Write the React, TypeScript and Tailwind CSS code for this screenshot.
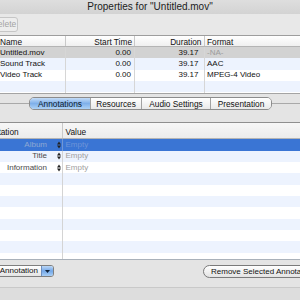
const tracks = [
  { name: "Untitled.mov", start: "0.00", duration: "39.17", format: "-NA-", dim: true },
  { name: "Sound Track", start: "0.00", duration: "39.17", format: "AAC", dim: false },
  { name: "Video Track", start: "0.00", duration: "39.17", format: "MPEG-4 Video", dim: false },
];

const annotations = [
  { key: "Album", value: "Empty" },
  { key: "Title", value: "Empty" },
  { key: "Information", value: "Empty" },
];

const tabs = [
  { label: "Annotations", width: "w-[60px]", selected: true },
  { label: "Resources", width: "w-[51px]", selected: false },
  { label: "Audio Settings", width: "w-[69px]", selected: false },
  { label: "Presentation", width: "w-[61px]", selected: false },
];

function Stepper() {
  return (
    <svg width="4" height="8" viewBox="0 0 4 8" className="shrink-0">
      <path d="M0 3.4 L2 0.6 L4 3.4 Z" fill="#222" />
      <path d="M0 4.6 L4 4.6 L2 7.4 Z" fill="#222" />
    </svg>
  );
}

export default function App() {
  const stripes = Array.from({ length: 11 }, (_, i) => i);

  return (
    <div className="flex h-[300px] w-[300px] flex-col overflow-hidden bg-[#e4e4e4] font-['Liberation_Sans',Arial,sans-serif] text-[#111]">
      {/* title bar */}
      <div className="flex h-[14px] shrink-0 items-center justify-center bg-gradient-to-b from-[#dedede] to-[#d3d3d3] text-[10px] leading-none text-[#1c1c1c]">
        Properties for "Untitled.mov"
      </div>

      {/* toolbar */}
      <div className="flex h-[22px] shrink-0 items-center border-b border-[#9d9d9d] bg-[#e8e8e8]">
        <div className="ml-[-10px] flex h-[15px] w-[28px] items-center justify-center rounded-[3px] border border-[#c6c6c6] bg-[#ededed] text-[8.5px] text-[#a3a3a3]">
          Delete
        </div>
      </div>

      {/* tracks table */}
      <div className="shrink-0 border-b border-[#a4a4a4] bg-white text-[8px] leading-none">
        <div className="grid h-[11px] grid-cols-[66px_69px_70px_1fr] items-center border-b border-[#b4b4b4] bg-gradient-to-b from-white to-[#efefef] text-[8.3px]">
          <div className="h-full border-r border-[#c9c9c9] pt-[2px]">Name</div>
          <div className="h-full border-r border-[#c9c9c9] pr-[2px] pt-[2px] text-right">Start Time</div>
          <div className="h-full border-r border-[#c9c9c9] pr-[2.5px] pt-[2px] text-right">Duration</div>
          <div className="h-full pl-[2px] pt-[2px]">Format</div>
        </div>
        {[0, 1, 2, 3].map((i) => {
          const t = tracks[i];
          const bg = i === 0 ? "bg-[#d2d2d2]" : i % 2 === 1 ? "bg-[#edf3fe]" : "bg-white";
          return (
            <div key={i} className={`grid h-[11.33px] grid-cols-[66px_69px_70px_1fr] items-stretch ${bg}`}>
              <div className="flex items-center border-r border-[#d6d6d6]">{t?.name}</div>
              <div className="flex items-center justify-end border-r border-[#d6d6d6] pr-[3px]">{t?.start}</div>
              <div className="flex items-center justify-end border-r border-[#d6d6d6] pr-[5.5px]">{t?.duration}</div>
              <div className={`flex items-center pl-[2px] ${t?.dim ? "text-[#9c9c9c]" : ""}`}>{t?.format}</div>
            </div>
          );
        })}
        <div className="grid h-[1px] grid-cols-[66px_69px_70px_1fr]">
          <div className="border-r border-[#d6d6d6]" />
          <div className="border-r border-[#d6d6d6]" />
          <div className="border-r border-[#d6d6d6]" />
          <div />
        </div>
      </div>

      {/* tab strip */}
      <div className="mt-[3px] flex h-[13px] shrink-0 items-center">
        <div className="h-px w-[29px] bg-[#a9a9a9]" />
        <div className="flex h-full overflow-hidden rounded-[5px] border border-[#8c8c8c] text-[8.3px] leading-none">
          {tabs.map((tab, i) => (
            <div
              key={tab.label}
              className={`flex ${tab.width} items-center justify-center ${i > 0 ? "border-l border-[#a2a2a2]" : ""} ${
                tab.selected
                  ? "bg-gradient-to-b from-[#c4dcf7] via-[#7fb0ea] to-[#aed2f6] text-[#0d1a2a]"
                  : "bg-gradient-to-b from-white to-[#e9e9e9] text-[#111]"
              }`}
            >
              {tab.label}
            </div>
          ))}
        </div>
        <div className="h-px flex-1 bg-[#a9a9a9]" />
      </div>

      {/* annotations table */}
      <div className="mt-[12px] shrink-0 border-t border-[#8f8f8f] bg-white text-[8px] leading-none">
        <div className="grid h-[16px] grid-cols-[63px_1fr] border-b border-[#b4b4b4] bg-gradient-to-b from-[#f7f7f7] to-[#ececec] text-[8.3px]">
          <div className="flex items-end overflow-hidden border-r border-[#c9c9c9] pb-[2px]">
            <span className="ml-[-21px]">Annotation</span>
          </div>
          <div className="flex items-end pb-[2px] pl-[2.5px]">Value</div>
        </div>
        <div className="h-[120px] overflow-hidden">
          {stripes.map((i) => {
            const a = annotations[i];
            const bg = i === 0 ? "bg-[#3a75d4]" : i % 2 === 1 ? "bg-[#edf3fe]" : "bg-white";
            return (
              <div key={i} className={`grid h-[11.33px] grid-cols-[63px_1fr] ${bg}`}>
                <div className={`flex items-center justify-end border-r pr-[1px] ${i === 0 ? "border-[#6f96d6]" : "border-[#d4d4d4]"}`}>
                  {a ? (
                    <>
                      <span className={`mr-[10px] ${i === 0 ? "text-[#8ea8d3]" : "text-[#4a4a4a]"}`}>{a.key}</span>
                      <Stepper />
                    </>
                  ) : null}
                </div>
                <div className={`flex items-center pl-[2.5px] ${i === 0 ? "text-[#6d94d8]" : "text-[#a0a0a0]"}`}>
                  {a?.value}
                </div>
              </div>
            );
          })}
        </div>
      </div>

      {/* bottom buttons */}
      <div className="flex h-[28px] shrink-0 items-start border-t border-[#a9b1ba] pt-[5px] text-[8px] leading-none">
        <div className="ml-[-10px] flex h-[12px] w-[64px] shrink-0 overflow-hidden rounded-[3px] border border-[#7f7f7f] bg-gradient-to-b from-white to-[#e4e4e4]">
          <div className="flex flex-1 items-center justify-end pr-[3px]">Annotation</div>
          <div className="flex w-[12px] items-center justify-center border-l border-[#6d8fc0] bg-gradient-to-b from-[#bcd7f6] via-[#74a8e8] to-[#a9cff5]">
            <svg width="5" height="3" viewBox="0 0 5 3">
              <path d="M0 0 L5 0 L2.5 3 Z" fill="#10243c" />
            </svg>
          </div>
        </div>
        <div className="ml-[149px] flex h-[13px] w-[120px] shrink-0 items-center rounded-full border border-[#7a7a7a] bg-gradient-to-b from-white to-[#e3e3e3] pl-[7px]">
          Remove Selected Annotation
        </div>
      </div>

      <div className="flex-1 border-t border-[#c9c9c9] bg-[#dddddd]" />
    </div>
  );
}
